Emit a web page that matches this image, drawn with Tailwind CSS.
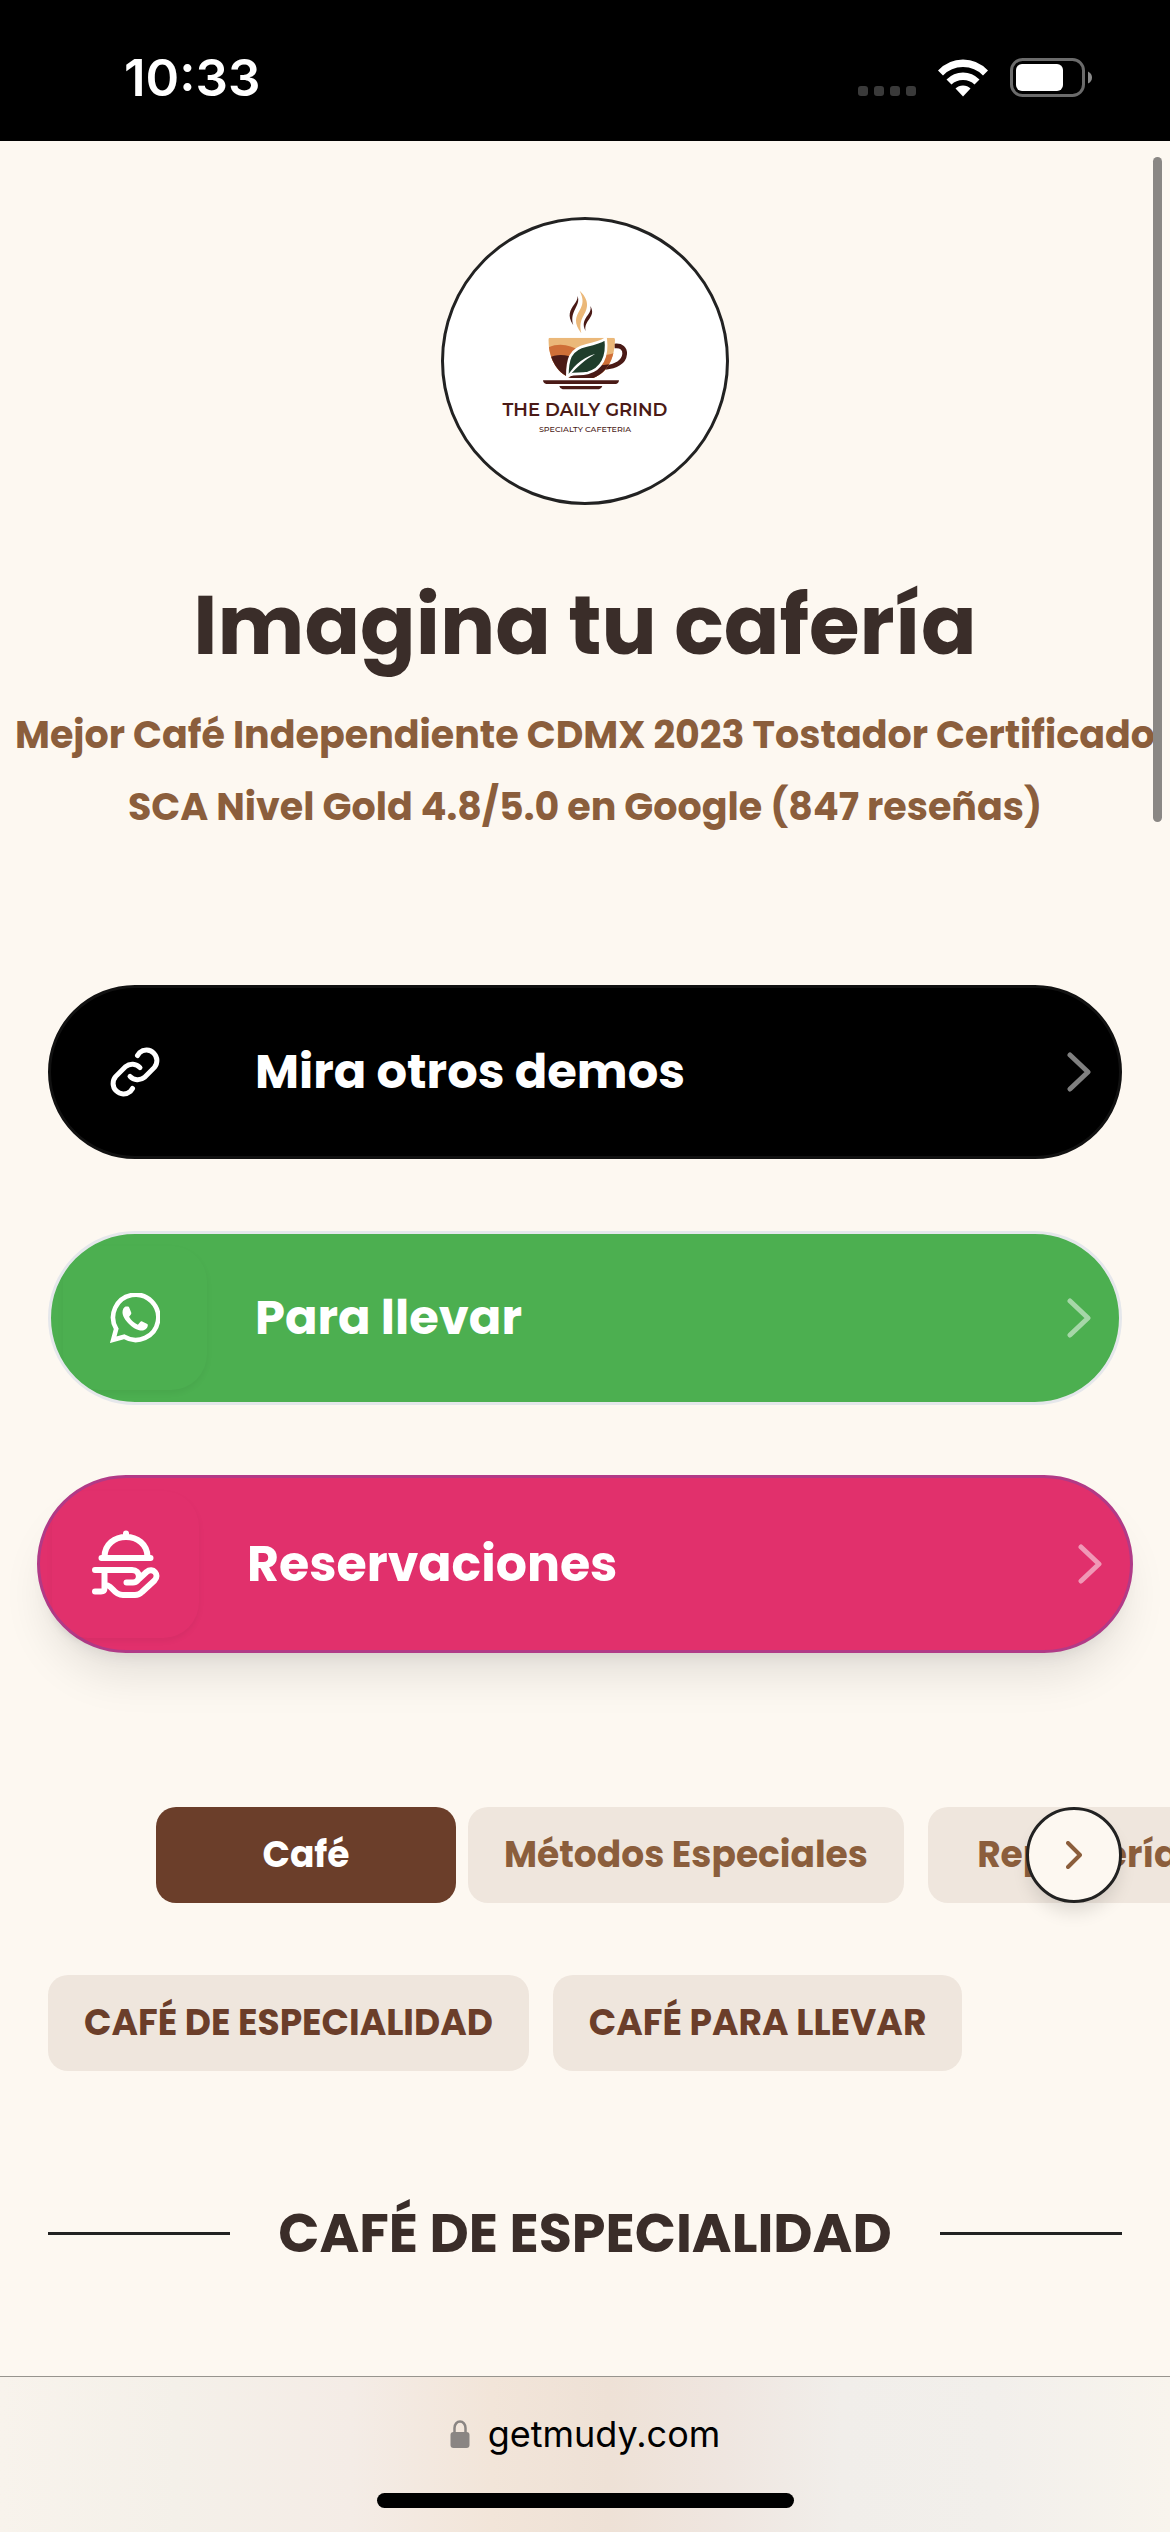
<!DOCTYPE html>
<html lang="es">
  <head>
    <meta charset="utf-8" />
    <meta name="viewport" content="width=device-width, initial-scale=1" />
    <title>Imagina tu cafería</title>
    <script src="https://cdn.jsdelivr.net/npm/@tailwindcss/browser@4"></script>
  </head>
  <body
    class="relative flex flex-col min-h-screen overflow-x-hidden bg-[#fdf8f1] font-['Poppins','Inter',sans-serif] font-bold text-[#3a2d29]"
  >
    <!-- Status bar -->
    <header
      class="flex items-center justify-between h-[141px] pl-[124px] pr-[78px] pt-3.5 bg-black text-white"
    >
      <span class="text-[51px] leading-none font-semibold font-['Inter',sans-serif]">10:33</span>
      <div class="flex items-center gap-[22px]">
        <svg class="w-[58px] h-[38px]" viewBox="0 0 58 38" fill="#3a3a3a">
          <rect x="0" y="27" width="10" height="10" rx="3" />
          <rect x="16" y="27" width="10" height="10" rx="3" />
          <rect x="32" y="27" width="10" height="10" rx="3" />
          <rect x="48" y="27" width="10" height="10" rx="3" />
        </svg>
        <svg class="w-[50px] h-[38px]" viewBox="0 0 50 38" fill="#fff">
          <path d="M0 11.5Q10.500 .5 25 .5T50 11.500L45 16.500Q37 8 25 8T5 16.500Z" />
          <path d="M8.500 20.500Q15.500 13.500 25 13.500T41.500 20.500L36.500 25.500Q32 21 25 21T13.500 25.500Z" />
          <path d="M17.500 29.500Q20.500 26.500 25 26.500T32.500 29.500L25 37.500Z" />
        </svg>
        <svg class="w-[82px] h-[40px]" viewBox="0 0 82 40" fill="none">
          <rect x="1.500" y="1.500" width="72" height="36" rx="11" stroke="#6b6b6b" stroke-width="3" />
          <rect x="6" y="6" width="47" height="27" rx="6" fill="#fff" />
          <path d="M78 13.500q4 2 4 6t-4 6z" fill="#8a8a8a" />
        </svg>
      </div>
    </header>

    <main class="flex-1 pt-[76px]">
      <!-- Profile -->
      <div
        class="size-[288px] mx-auto rounded-full border-3 border-[#222] bg-white overflow-hidden"
      >
        <svg class="size-full" viewBox="42 60 846 846" role="img" aria-label="The Daily Grind">
          <path fill="#4a1a16" d="M443 288c10 32-26 44-13 88c-20-30-9-46 3-63c6-9 10-15 10-25z" />
          <path fill="#ebb879" d="M449 272c38 36 18 62 8 82c-7 15-7 28-3 46c-24-32-17-48-5-69c10-18 13-32 0-59z" />
          <path fill="#4a1a16" d="M481 318c20 34-22 42-14 76c-12-22-3-36 6-48c7-10 11-17 8-28z" />
          <path fill="none" stroke="#4a1a16" stroke-width="14" d="M553 438c22-3 32 9 31 24c-2 24-27 38-58 40" />
          <clipPath id="cup">
            <path d="M359 413H550q5 0 5 6C554 472 535 515 490 534H422C377 518 356 470 355 419q0-6 4-6z" />
          </clipPath>
          <g clip-path="url(#cup)">
            <rect x="350" y="410" width="210" height="126" fill="#ebb879" />
            <path fill="#cf6f38" d="M350 444C390 426 420 436 450 452S520 472 560 456V540H350z" />
            <path fill="#4a1a16" d="M350 476C380 460 410 462 440 478S520 505 560 484V540H350z" />
          </g>
          <path
            fill="#1f3d2b"
            stroke="#fff"
            stroke-width="8"
            stroke-linejoin="round"
            d="M527 416C534 470 515 508 473 519C450 524 435 519 420 525L412 530C412 480 418 447 470 436C495 431 512 426 527 416z"
          />
          <path fill="#fff" d="M410 532C425 505 450 476 496 461C465 480 440 500 420 526z" />
          <path fill="#4a1a16" d="M339 541H567q-1 10-9 11H349q-9-1-10-11z" />
          <path fill="#4a1a16" d="M388 558H517q-3 9-10 10H398q-8-1-10-10z" />
          <text x="465" y="647" text-anchor="middle" font-family="Montserrat, Inter, sans-serif" font-size="54" font-weight="600" fill="#4a1a16">
            THE DAILY GRIND
          </text>
          <text x="465" y="696" text-anchor="middle" font-family="Montserrat, Inter, sans-serif" font-size="24" font-weight="500" fill="#4a1a16">
            SPECIALTY CAFETERIA
          </text>
        </svg>
      </div>
      <h1 class="mt-20 text-center text-[82px] leading-none">Imagina tu cafería</h1>
      <p class="mt-8 text-center text-[38px] leading-[72px] text-[#8b5e3c]">
        Mejor Café Independiente CDMX 2023 Tostador Certificado<br />
        SCA Nivel Gold 4.8/5.0 en Google (847 reseñas)
      </p>

      <!-- Links -->
      <nav class="flex flex-col gap-[72px] mt-[142px] px-12 text-white text-[48px] leading-none">
        <a
          href="#"
          class="flex items-center h-[174px] pl-3 pr-7 rounded-full border-3 border-[#111] bg-black"
        >
          <span class="flex items-center justify-center size-36">
            <svg class="size-[50px]" viewBox="0 0 50 50" fill="none" stroke="currentColor" stroke-width="5" stroke-linecap="round">
              <path id="loop" d="M27.500 8.500l2.100-2.900a10.500 10.500 0 0 1 14.800 14.800l-10 10a10.500 10.500 0 0 1-14.400-1" />
              <use href="#loop" transform="rotate(180 25 25)" />
            </svg>
          </span>
          <span class="flex-1 pl-12">Mira otros demos</span>
          <svg class="w-6 h-10" viewBox="0 0 24 40" fill="none" stroke="#fff" stroke-opacity=".5" stroke-width="5" stroke-linecap="round" stroke-linejoin="round">
            <path d="M3 3l18 17L3 37" />
          </svg>
        </a>
        <a
          href="#"
          class="flex items-center h-[174px] pl-3 pr-7 rounded-full border-3 border-[#e5e7eb] bg-[#4caf50] overflow-hidden"
        >
          <span class="flex items-center justify-center size-36 rounded-[36px] shadow-[0_3px_6px_rgba(0,0,0,0.05)]">
            <svg class="size-[50px]" viewBox="0 0 50 50" fill="none">
              <path
                stroke="#fff"
                stroke-width="4.600"
                d="M3.200 46.800L6.200 35.800A22.600 22.600 0 1 1 14.200 43.800z"
              />
              <path
                fill="#fff"
                d="M15.500 13.500h2c1 0 1.400.4 1.800 1.300l1.900 4.700c.3.800 0 1.500-.5 2.200l-1.600 2c2.200 4 5 6.300 8.800 8l2.300-2.700c.6-.7 1.200-.8 2-.4l4.600 2.200c.8.4 1.100.8 1 1.700c-.5 3.300-3.200 5-6.200 5c-2.800 0-7.300-1.500-11.800-5.700c-5-4.700-7.300-9-7.300-12.500c0-2.500 1-4.700 3-5.800z"
              />
            </svg>
          </span>
          <span class="flex-1 pl-12">Para llevar</span>
          <svg class="w-6 h-10" viewBox="0 0 24 40" fill="none" stroke="#fff" stroke-opacity=".5" stroke-width="5" stroke-linecap="round" stroke-linejoin="round">
            <path d="M3 3l18 17L3 37" />
          </svg>
        </a>
        <a
          href="#"
          class="flex items-center h-[178px] -mx-[11px] -mt-[2px] pl-3 pr-7 rounded-full border-3 border-[#b13a87] bg-[#e1306c] text-[49px] shadow-[0_30px_45px_-9px_rgba(0,0,0,0.1),0_12px_18px_-12px_rgba(0,0,0,0.1)]"
        >
          <span class="flex items-center justify-center size-[147px] rounded-[36px] shadow-[0_3px_6px_rgba(0,0,0,0.05)]">
            <svg class="size-[68px]" viewBox="0 0 68 68" fill="none" stroke="currentColor" stroke-width="6" stroke-linecap="round" stroke-linejoin="round">
              <path d="M9.500 28H58.500M12.500 27C12.500 14 23 7 34 7S55.500 14 55.500 27M34 3.500V6" />
              <path d="M3 40H40C49 40 49 52.500 41 52.500H34.500M12.500 40V58C12.500 60.500 11.500 61.500 9 61.500H3" />
              <path d="M16 55.500C21 57 22 65 31 65H43C47 65 48 64 50 62L62.500 50.500C68 45 61 36.500 54.500 42L47.500 48.500" />
            </svg>
          </span>
          <span class="flex-1 pl-12">Reservaciones</span>
          <svg class="w-6 h-10" viewBox="0 0 24 40" fill="none" stroke="#fff" stroke-opacity=".5" stroke-width="5" stroke-linecap="round" stroke-linejoin="round">
            <path d="M3 3l18 17L3 37" />
          </svg>
        </a>
      </nav>

      <!-- Menu categories -->
      <div class="relative mt-[154px]">
        <div class="flex pl-[156px] overflow-hidden text-[36px] leading-none text-[#8b5e3c]">
          <button class="shrink-0 min-w-[300px] h-24 mr-3 px-9 rounded-[20px] bg-[#6b3e2a] text-white">Café</button>
          <button class="shrink-0 min-w-[300px] h-24 mr-6 px-9 rounded-[20px] bg-[#efe6dd]">Métodos Especiales</button>
          <button class="shrink-0 min-w-[300px] h-24 px-9 rounded-[20px] bg-[#efe6dd]">Repostería</button>
        </div>
        <button
          aria-label="Siguiente"
          class="absolute top-0 right-12 flex items-center justify-center size-24 rounded-full border-3 border-[#222] bg-[#fdf8f1] shadow-[0_12px_18px_-3px_rgba(0,0,0,0.12)]"
        >
          <svg class="w-4 h-7" viewBox="0 0 16 28" fill="none" stroke="#8b5e3c" stroke-width="4" stroke-linecap="round" stroke-linejoin="round">
            <path d="M2 2l12 12L2 26" />
          </svg>
        </button>
      </div>
      <div class="flex gap-6 mt-[72px] px-12 text-[36px] leading-none text-[#6b3e2a]">
        <button class="h-24 px-9 rounded-[20px] bg-[#efe6dd]">CAFÉ DE ESPECIALIDAD</button>
        <button class="h-24 px-9 rounded-[20px] bg-[#efe6dd]">CAFÉ PARA LLEVAR</button>
      </div>

      <div class="flex items-center gap-12 mt-[126px] px-12">
        <hr class="flex-1 border-t-3 border-[#222]" />
        <h2 class="text-[54px] leading-[72px]">CAFÉ DE ESPECIALIDAD</h2>
        <hr class="flex-1 border-t-3 border-[#222]" />
      </div>
    </main>

    <!-- Browser bar -->
    <footer
      class="flex flex-col items-center justify-between h-[156px] pt-[33px] pb-6 border-t border-[#97948e] bg-[linear-gradient(90deg,#f8f3ec,#f4f0e9_15%,#f4ece6_30%,#f2e5d9_42%,#eee1d6_52%,#efe6e0_62%,#f1eeea_72%,#f2efeb_85%,#f8f4ed)] font-['Inter',sans-serif] font-normal text-black"
    >
      <button class="flex items-center gap-[18px] text-[36px] leading-[48px]">
        <svg class="w-5 h-7" viewBox="0 0 20 28">
          <path d="M4.500 13V8a5.500 6.500 0 0 1 11 0v5" fill="none" stroke="#8a8583" stroke-width="2.500" />
          <rect x="0.500" y="12" width="19" height="16" rx="3" fill="#8a8583" />
        </svg>
        getmudy.com
      </button>
      <div class="w-[417px] h-[15px] rounded-full bg-black"></div>
    </footer>

    <!-- Scroll indicator -->
    <div class="absolute top-[157px] right-2 w-[9px] h-[665px] rounded-full bg-[#8a8784]"></div>
  </body>
</html>
